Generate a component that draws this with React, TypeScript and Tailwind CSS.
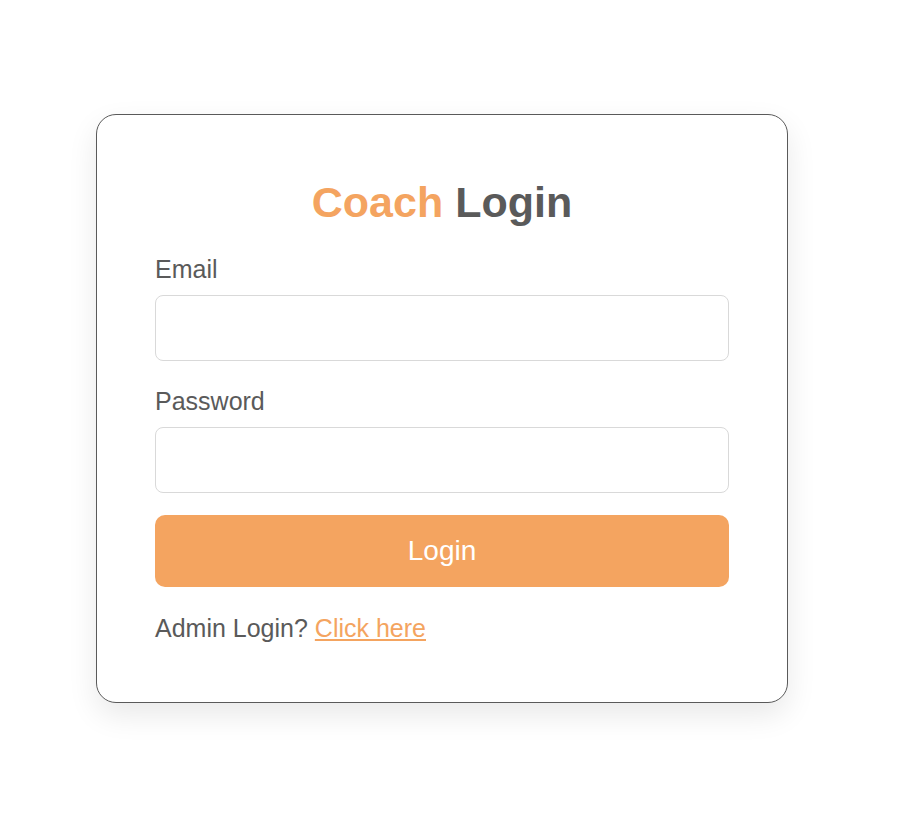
import React, { useState } from 'react';

const App: React.FC = () => {
  const [email, setEmail] = useState('');
  const [password, setPassword] = useState('');

  return (
    <div className="min-h-[814px] bg-white pt-[114px] pl-[96px] font-['Liberation_Sans',Arial,sans-serif]">
      <div className="w-[692px] h-[589px] rounded-[20px] border border-[#5a5a5a] bg-white px-[58px] pt-[63px] shadow-[0_12px_30px_rgba(0,0,0,0.09)]">
        <h1 className="h-[48px] text-center text-[43px] font-bold leading-[48px]">
          <span className="text-[#f4a460]">Coach</span> <span className="text-[#5a5a5a]">Login</span>
        </h1>

        <form className="flex flex-col" onSubmit={(e) => e.preventDefault()}>
          <label className="mt-[29px] text-[25px] leading-[28px] text-[#5a5a5a]">Email</label>
          <input
            type="email"
            value={email}
            onChange={(e) => setEmail(e.target.value)}
            className="mt-[12px] h-[66px] w-full rounded-[8px] border border-[#d9d9d9] px-4 text-[22px] outline-none"
          />

          <label className="mt-[26px] text-[25px] leading-[28px] text-[#5a5a5a]">Password</label>
          <input
            type="password"
            value={password}
            onChange={(e) => setPassword(e.target.value)}
            className="mt-[12px] h-[66px] w-full rounded-[8px] border border-[#d9d9d9] px-4 text-[22px] outline-none"
          />

          <button
            type="submit"
            className="mt-[22px] h-[72px] w-full rounded-[10px] bg-[#f4a460] text-[28px] text-white"
          >
            Login
          </button>
        </form>

        <p className="mt-[27px] text-[25px] leading-[28px] text-[#5a5a5a]">
          Admin Login?{' '}
          <a href="#" className="text-[#f4a460] underline">
            Click here
          </a>
        </p>
      </div>
    </div>
  );
};

export default App;
